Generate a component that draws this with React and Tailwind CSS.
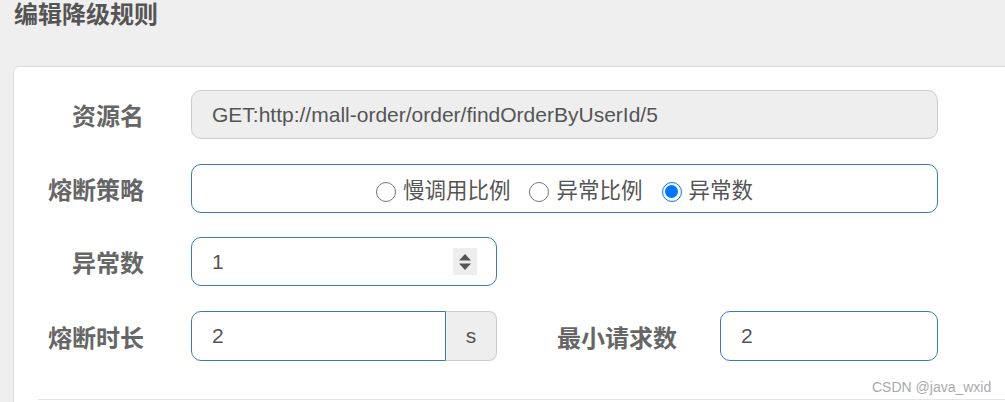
const font = { fontFamily: '"Liberation Sans", "Noto Sans CJK SC", sans-serif' }

const Radio = ({ checked, label }) => (
    <label className="flex items-center">
        {checked ? (
            <span className="w-[20px] h-[20px] rounded-full border-[1.5px] border-[#0075ff] bg-white flex items-center justify-center">
                <span className="w-[13px] h-[13px] rounded-full bg-[#0075ff]" />
            </span>
        ) : (
            <span className="w-[20px] h-[20px] rounded-full border border-[#767676] bg-white" />
        )}
        <span className="ml-[7px] text-[21.5px] text-[#555]">{label}</span>
    </label>
)

const Label = ({ children, className = '' }) => (
    <div className={`w-[130px] shrink-0 pt-[5px] text-right text-[24px] font-bold text-[#666] ${className}`}>
        {children}
    </div>
)

const Spinner = () => (
    <div className="w-[24px] h-[27px] bg-[#eeeeee] flex items-center justify-center">
        <svg width="14" height="18" viewBox="0 0 14 18">
            <polygon points="7,1 13,7.5 1,7.5" fill="#555" />
            <polygon points="1,10.5 13,10.5 7,17" fill="#555" />
        </svg>
    </div>
)

export default function App() {
    return (
        <div className="w-[1005px] h-[402px] overflow-hidden bg-[#efefef] relative" style={font}>
            <h2 className="pl-[14px] h-[30px] leading-[30px] text-[24px] font-bold text-[#555]">编辑降级规则</h2>

            <div className="ml-[13px] mt-[36px] w-[1010px] h-[400px] bg-white border border-[#dddddd] rounded-tl-[6px]">
                <div className="pt-[23px] flex flex-col">
                    <div className="flex items-center h-[49px]">
                        <Label>资源名</Label>
                        <div className="ml-[47px] w-[747px] h-full flex items-center px-[20px] bg-[#eeeeee] border border-[#cccccc] rounded-[10px] text-[21px] text-[#555]">
                            GET:http://mall-order/order/findOrderByUserId/5
                        </div>
                    </div>

                    <div className="flex items-center h-[49px] mt-[25px]">
                        <Label>熔断策略</Label>
                        <div className="ml-[47px] w-[747px] h-full flex items-center justify-center border border-[#3a7bbf] rounded-[10px]">
                            <div className="flex items-center gap-[19px] pt-[6px]">
                                <Radio label="慢调用比例" />
                                <Radio label="异常比例" />
                                <Radio checked label="异常数" />
                            </div>
                        </div>
                    </div>

                    <div className="flex items-center h-[49px] mt-[24px]">
                        <Label>异常数</Label>
                        <div className="ml-[47px] w-[306px] h-full flex items-center justify-between pl-[20px] pr-[19px] border border-[#3a7bbf] rounded-[10px] text-[21px] text-[#555]">
                            <span>1</span>
                            <Spinner />
                        </div>
                    </div>

                    <div className="flex items-center h-[50px] mt-[25px]">
                        <Label>熔断时长</Label>
                        <div className="ml-[47px] w-[306px] h-full flex">
                            <div className="flex-1 flex items-center pl-[20px] border border-[#3a7bbf] rounded-l-[10px] text-[21px] text-[#555]">
                                2
                            </div>
                            <div className="w-[51px] flex items-center justify-center bg-[#eeeeee] border border-l-0 border-[#cccccc] rounded-r-[8px] text-[21px] text-[#555]">
                                s
                            </div>
                        </div>
                        <Label className="ml-[50px] w-[128px]">最小请求数</Label>
                        <div className="ml-[43px] w-[218px] h-full flex items-center pl-[20px] border border-[#3a7bbf] rounded-[10px] text-[21px] text-[#555]">
                            2
                        </div>
                    </div>
                </div>

                <div className="ml-[24px] mt-[38px] border-t border-[#e5e5e5]" />
            </div>

            <div className="absolute left-[872px] top-[377px] text-[14px] text-[#aaaaaa]">CSDN @java_wxid</div>
        </div>
    )
}
